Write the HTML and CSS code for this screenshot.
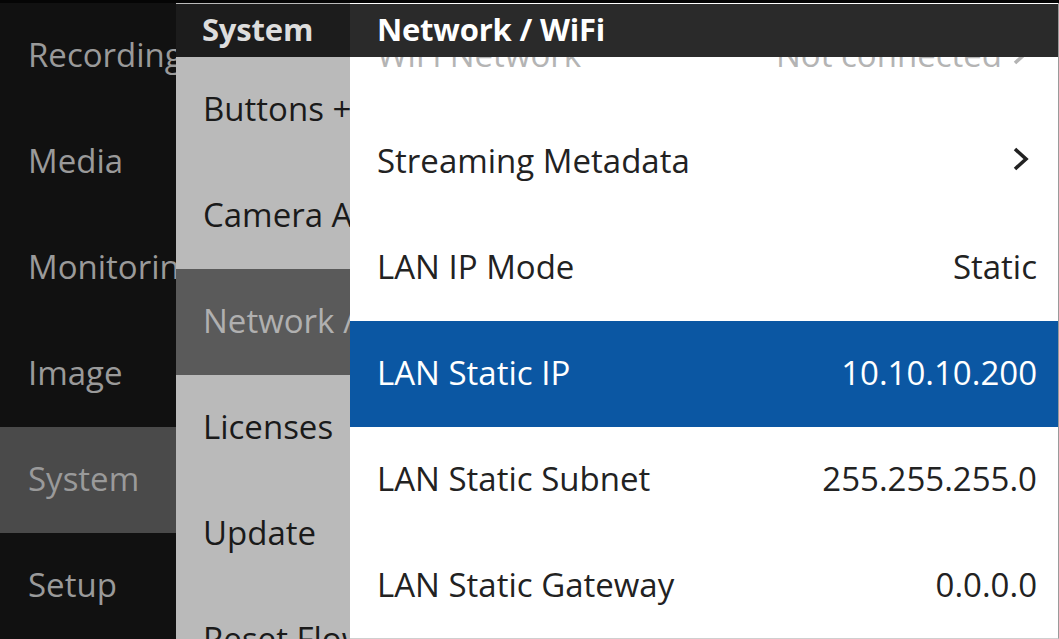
FILE: index.html
```html
<!DOCTYPE html>
<html lang="en">
<head>
<meta charset="utf-8">
<title>Network / WiFi</title>
<link rel="stylesheet" href="styles.css">
</head>
<body>
<div class="screen">
  <nav class="col col-main">
    <div class="row">Recording</div>
    <div class="row">Media</div>
    <div class="row">Monitoring</div>
    <div class="row">Image</div>
    <div class="row active">System</div>
    <div class="row">Setup</div>
  </nav>

  <nav class="col col-sub">
    <div class="head">System</div>
    <div class="row">Buttons + Controls</div>
    <div class="row">Camera Access</div>
    <div class="row active">Network / WiFi</div>
    <div class="row">Licenses</div>
    <div class="row">Update</div>
    <div class="row">Reset Flow</div>
  </nav>

  <section class="col col-detail">
    <div class="head">Network / WiFi</div>
    <div class="list">
      <div class="row disabled"><span>WiFi Network</span><span class="val">Not connected <svg class="chev" viewBox="0 0 18 26"><polyline points="3,3 14,13 3,23"/></svg></span></div>
      <div class="row"><span>Streaming Metadata</span><span class="val"><svg class="chev" viewBox="0 0 18 26"><polyline points="3,3 14,13 3,23"/></svg></span></div>
      <div class="row"><span>LAN IP Mode</span><span class="val">Static</span></div>
      <div class="row active"><span>LAN Static IP</span><span class="val">10.10.10.200</span></div>
      <div class="row"><span>LAN Static Subnet</span><span class="val">255.255.255.0</span></div>
      <div class="row"><span>LAN Static Gateway</span><span class="val">0.0.0.0</span></div>
    </div>
  </section>
</div>
</body>
</html>
```

FILE: styles.css
```css
html, body {
  margin: 0;
  padding: 0;
  background: #050505;
}

body {
  width: 1059px;
  height: 639px;
  overflow: hidden;
  font-family: "Open Sans", "Noto Sans", sans-serif;
  font-size: 33px;
}

.screen {
  display: grid;
  grid-template-columns: 176px 174px 709px;
  height: 636px;
  margin-top: 3px;
}

.col {
  overflow: hidden;
  white-space: nowrap;
}

.row {
  height: 106px;
  display: flex;
  align-items: center;
  padding-left: 27px;
  padding-bottom: 4px;
  box-sizing: border-box;
}

/* main menu */
.col-main {
  background: #111111;
  color: #9a9a9a;
}
.col-main .row {
  padding-left: 28px;
}
.col-main .row.active {
  background: #4a4a4a;
}

/* sub menu */
.col-sub {
  background: #bababa;
  color: #1a1a1a;
}
.col-sub .row.active {
  background: #5a5a5a;
  color: #b0b0b0;
}
.head {
  height: 53px;
  margin-top: 1px;
  display: flex;
  align-items: center;
  padding-left: 26px;
  padding-bottom: 4px;
  box-sizing: border-box;
  font-weight: 700;
  font-size: 31px;
  letter-spacing: -0.2px;
}
.col-sub .head {
  background: #1c1c1c;
  color: #dddddd;
}

/* detail */
.col-detail {
  display: grid;
  background: #ffffff;
  color: #222222;
  border-right: 1px solid #9a9a9a;
  border-bottom: 1px solid #cfcfcf;
}
.col-detail .head,
.col-detail .list {
  grid-area: 1 / 1;
}
.col-detail .head {
  align-self: start;
  background: #2a2a2a;
  color: #ffffff;
  z-index: 1;
  padding-left: 27px;
}
.col-detail .row {
  justify-content: space-between;
  padding-left: 27px;
  padding-right: 21px;
}
.col-detail .row.disabled {
  color: #b4b4b4;
}
.col-detail .row.active {
  background: #0b57a3;
  color: #ffffff;
}
.val {
  display: flex;
  align-items: center;
  gap: 10px;
}
.chev {
  width: 18px;
  height: 26px;
  fill: none;
  stroke: #222222;
  stroke-width: 3.6;
  margin-right: 7px;
  margin-top: -2px;
}
.disabled .chev {
  stroke: #b4b4b4;
}
```
